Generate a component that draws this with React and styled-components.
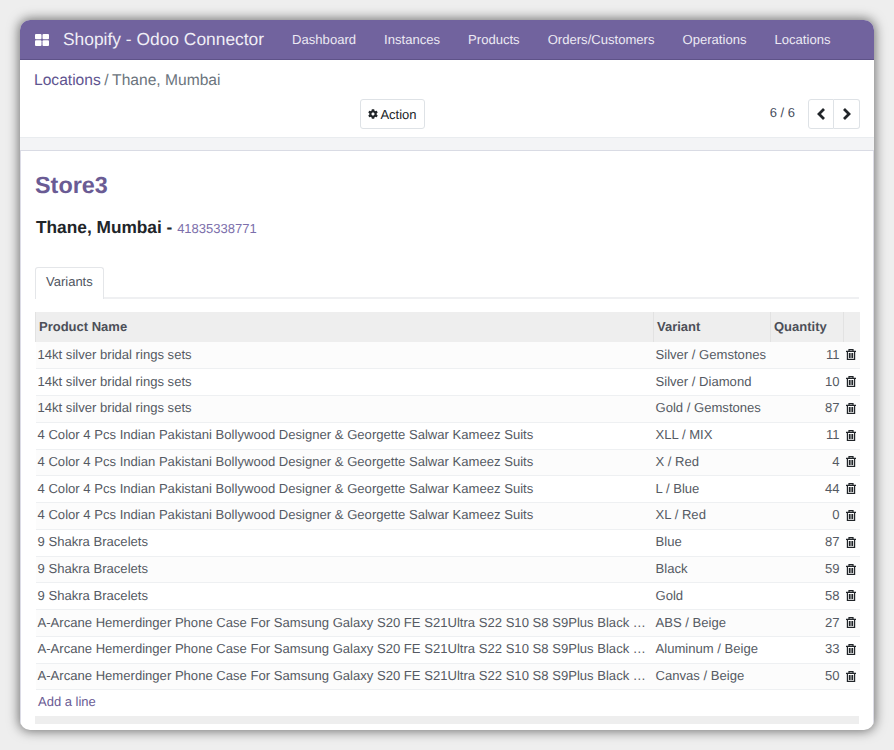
import React from 'react';
import styled, { createGlobalStyle } from 'styled-components';
import { FaCog } from 'react-icons/fa';

const GlobalStyle = createGlobalStyle`
  html, body {
    margin: 0;
    height: 750px;
    overflow: hidden;
    background-color: #eeeeee;
    font-family: "Liberation Sans", Arial, sans-serif;
    font-size: 13px;
    color: #4c4c4c;
    text-rendering: geometricPrecision;
  }
`;

const Page = styled.div`
  padding: 20px;
  height: 750px;
  box-sizing: border-box;
`;

const Win = styled.div`
  height: 710px;
  background-color: #fff;
  border-radius: 10px;
  box-shadow: 0 0 12px 1px rgba(0, 0, 0, 0.55);
  overflow: hidden;
  display: flex;
  flex-direction: column;
`;

const NavBar = styled.div`
  height: 40px;
  background-color: #71639e;
  border-bottom: 1px solid #5e5288;
  box-sizing: border-box;
  display: flex;
  align-items: center;
  color: #fff;
  padding-left: 15px;
`;

const AppIcon = styled.svg`
  width: 14px;
  height: 12px;
  fill: #fff;
`;

const Brand = styled.span`
  font-size: 17.4px;
  margin-left: 14px;
  margin-right: 14px;
  color: #f0eef6;
`;

const NavItem = styled.span`
  font-size: 13.08px;
  padding: 0 14px;
  color: #ece9f3;
`;

const ControlPanel = styled.div`
  height: 77px;
  padding: 0 14px;
  display: flex;
  flex-direction: column;
  border-bottom: 1px solid #e9ecef;
`;

const Breadcrumb = styled.div`
  font-size: 15.6px;
  height: 39px;
  box-sizing: border-box;
  padding-top: 3px;
  display: flex;
  align-items: center;
  color: #6c757d;
  gap: 3.5px;
`;

const CrumbLink = styled.span`
  color: #5f5590;
`;

const ButtonRow = styled.div`
  display: flex;
  align-items: flex-start;
`;

const ActionButton = styled.div`
  margin-left: 326px;
  width: 65px;
  height: 30px;
  box-sizing: border-box;
  border: 1px solid #dee2e6;
  border-radius: 3px;
  display: flex;
  align-items: center;
  justify-content: center;
  gap: 2px;
  color: #212529;
`;

const CogIcon = styled(FaCog)`
  width: 10px;
  height: 10px;
  color: #212529;
`;

const Pager = styled.div`
  margin-left: auto;
  display: flex;
  align-items: center;
  height: 30px;
`;

const PagerText = styled.span`
  color: #444b5a;
  margin-right: 13px;
  position: relative;
  top: -2px;
`;

const PagerButton = styled.div`
  width: 26px;
  height: 30px;
  box-sizing: border-box;
  border: 1px solid #dee2e6;
  border-left-width: ${({ $last }) => ($last ? '0' : '1px')};
  border-radius: ${({ $last }) => ($last ? '0 3px 3px 0' : '3px 0 0 3px')};
  display: flex;
  align-items: center;
  justify-content: center;
`;

const Chevron = styled.svg`
  width: 9px;
  height: 12px;
  fill: none;
  stroke: #212529;
  stroke-width: 2.8;
`;

const Strip = styled.div`
  height: 12px;
  background-color: #f3f4f6;
  border-bottom: 1px solid #d9dbe4;
`;

const Sheet = styled.div`
  flex: 1;
  padding: 0 15px;
  display: flex;
  flex-direction: column;
  box-shadow: inset 1px 0 0 #dcdce6, inset -1px 0 0 #dcdce6;
  box-sizing: border-box;
`;

const Title = styled.h1`
  margin: 20px 0 0 0;
  font-size: 23.4px;
  line-height: 28px;
  font-weight: bold;
  color: #6a5b94;
`;

const Subtitle = styled.div`
  margin: 18px 0 0 0;
  padding-left: 1px;
  font-size: 17.3px;
  line-height: 20px;
  font-weight: bold;
  color: #212529;
`;

const ExternalId = styled.span`
  font-size: 13px;
  font-weight: normal;
  color: #7c6fab;
`;

const Tabs = styled.div`
  margin-top: 28px;
  height: 32px;
  box-sizing: border-box;
  border-bottom: 2px solid #eff0f2;
  display: flex;
`;

const Tab = styled.div`
  height: 32px;
  box-sizing: border-box;
  padding: 0 10px 4px;
  display: flex;
  align-items: center;
  background-color: #fff;
  border: 1px solid #e4e6e9;
  border-bottom: none;
  border-radius: 3px 3px 0 0;
  color: #4f5561;
`;

const Table = styled.table`
  margin-top: 13px;
  width: 824px;
  table-layout: fixed;
  border-collapse: collapse;
`;

const Th = styled.th`
  height: 30px;
  box-sizing: border-box;
  padding: 0 3px 2px;
  text-align: left;
  font-weight: bold;
  background-color: #eeeeee;
  color: #4c4f58;
  border-left: 1px solid #e2e2e2;
  white-space: nowrap;
`;

const Row = styled.tr`
  height: 26.77px;
  background-color: ${({ $odd }) => ($odd ? '#fcfcfc' : '#fff')};
  border-bottom: 1px solid #eef0f2;
`;

const Td = styled.td`
  padding: 0 ${({ $right }) => ($right ? '4px' : '3px')} 2px 2px;
  font-size: 13.08px;
  white-space: nowrap;
  overflow: hidden;
  text-overflow: ellipsis;
  color: #555a63;
  text-align: ${({ $right }) => ($right ? 'right' : 'left')};
`;

const DeleteCell = styled.td`
  padding: 0 2px 1px 0;
  text-align: center;
  line-height: 0;
`;

const TrashIcon = styled.svg`
  width: 10px;
  height: 11px;
  fill: none;
  stroke: #212529;
  stroke-width: 1.2;
`;

const AddLine = styled.div`
  height: 26px;
  box-sizing: border-box;
  padding: 0 0 4px 3px;
  display: flex;
  align-items: center;
  color: #6a5b94;
`;

const Footer = styled.div`
  height: 8px;
  background-color: #eeeeee;
`;

const navLinks = ['Dashboard', 'Instances', 'Products', 'Orders/Customers', 'Operations', 'Locations'];

const silver = '14kt silver bridal rings sets';
const suits = '4 Color 4 Pcs Indian Pakistani Bollywood Designer & Georgette Salwar Kameez Suits';
const bracelets = '9 Shakra Bracelets';
const phoneCase = 'A-Arcane Hemerdinger Phone Case For Samsung Galaxy S20 FE S21Ultra S22 S10 S8 S9Plus Black Silicone Cover';

const rows = [
  [silver, 'Silver / Gemstones', 11],
  [silver, 'Silver / Diamond', 10],
  [silver, 'Gold / Gemstones', 87],
  [suits, 'XLL / MIX', 11],
  [suits, 'X / Red', 4],
  [suits, 'L / Blue', 44],
  [suits, 'XL / Red', 0],
  [bracelets, 'Blue', 87],
  [bracelets, 'Black', 59],
  [bracelets, 'Gold', 58],
  [phoneCase, 'ABS / Beige', 27],
  [phoneCase, 'Aluminum / Beige', 33],
  [phoneCase, 'Canvas / Beige', 50],
];

const App = () => (
  <Page>
    <GlobalStyle />
    <Win>
      <NavBar>
        <AppIcon viewBox="0 0 14 12">
          <rect x="0" y="0" width="6.5" height="5.2" rx="1" />
          <rect x="7.5" y="0" width="6.5" height="5.2" rx="1" />
          <rect x="0" y="6.2" width="6.5" height="5.8" rx="1" />
          <rect x="7.5" y="6.2" width="6.5" height="5.8" rx="1" />
        </AppIcon>
        <Brand>Shopify - Odoo Connector</Brand>
        {navLinks.map(link => (
          <NavItem key={link}>{link}</NavItem>
        ))}
      </NavBar>
      <ControlPanel>
        <Breadcrumb>
          <CrumbLink>Locations</CrumbLink>
          <span>/</span>
          <span>Thane, Mumbai</span>
        </Breadcrumb>
        <ButtonRow>
          <ActionButton>
            <CogIcon />
            Action
          </ActionButton>
          <Pager>
            <PagerText>6 / 6</PagerText>
            <PagerButton>
              <Chevron viewBox="0 0 9 12"><path d="M7 1 2 6l5 5" /></Chevron>
            </PagerButton>
            <PagerButton $last>
              <Chevron viewBox="0 0 9 12"><path d="M2 1l5 5-5 5" /></Chevron>
            </PagerButton>
          </Pager>
        </ButtonRow>
      </ControlPanel>
      <Strip />
      <Sheet>
        <Title>Store3</Title>
        <Subtitle>
          Thane, Mumbai - <ExternalId>41835338771</ExternalId>
        </Subtitle>
        <Tabs>
          <Tab>Variants</Tab>
        </Tabs>
        <Table>
          <colgroup>
            <col style={{ width: 618 }} />
            <col style={{ width: 117 }} />
            <col style={{ width: 73 }} />
            <col style={{ width: 16 }} />
          </colgroup>
          <thead>
            <tr>
              <Th>Product Name</Th>
              <Th>Variant</Th>
              <Th>Quantity</Th>
              <Th />
            </tr>
          </thead>
          <tbody>
            {rows.map(([name, variant, qty], i) => (
              <Row key={i} $odd={i % 2 === 0}>
                <Td>{name}</Td>
                <Td>{variant}</Td>
                <Td $right>{qty}</Td>
                <DeleteCell>
                  <TrashIcon viewBox="0 0 10 11">
                    <path d="M0 2.4h10M3 2.4V.7h4v1.7M1.4 2.4v8h7.2v-8M3.4 4v5M5 4v5M6.6 4v5" />
                  </TrashIcon>
                </DeleteCell>
              </Row>
            ))}
          </tbody>
        </Table>
        <AddLine>Add a line</AddLine>
        <Footer />
      </Sheet>
    </Win>
  </Page>
);

export default App;
